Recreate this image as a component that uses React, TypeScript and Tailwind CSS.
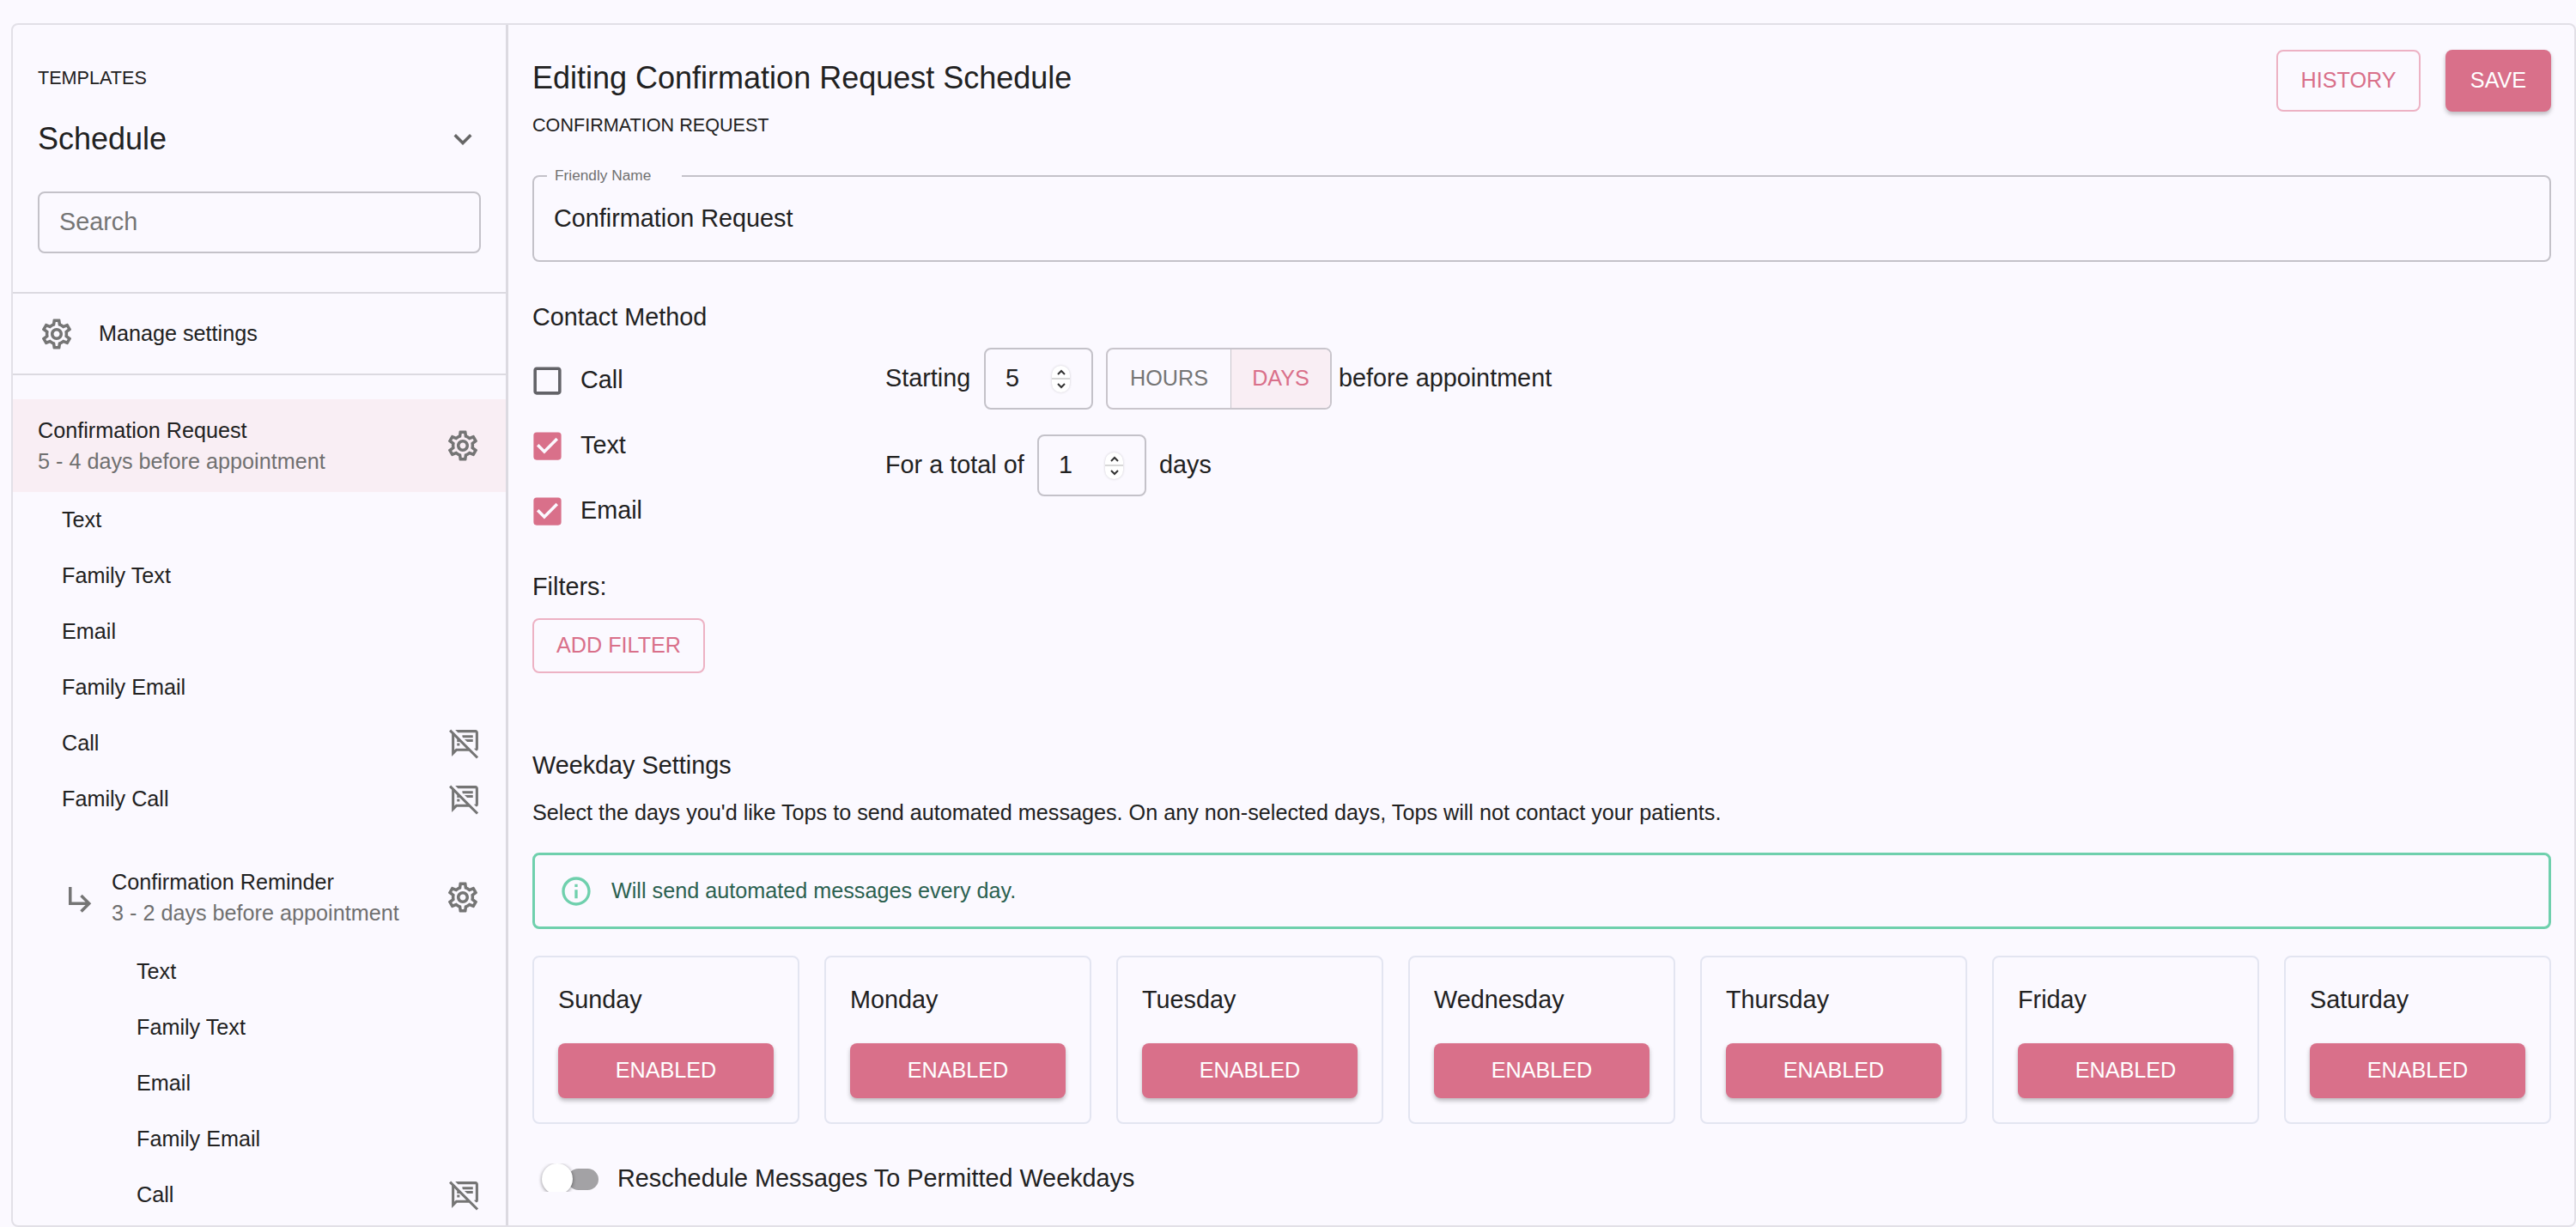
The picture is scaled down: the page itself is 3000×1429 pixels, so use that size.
import React from "react";
import {
  MdCheckBox,
  MdCheckBoxOutlineBlank,
  MdInfoOutline,
  MdKeyboardArrowDown,
  MdOutlineSettings,
  MdOutlineSpeakerNotesOff,
  MdSubdirectoryArrowRight,
} from "react-icons/md";

const days = ["Sunday", "Monday", "Tuesday", "Wednesday", "Thursday", "Friday", "Saturday"];

const MessageRow = ({ label, off, nested }: { label: string; off?: boolean; nested?: boolean }) => (
  <div className={`flex h-[65px] items-center justify-between pr-[29px] ${nested ? "pl-[144px]" : "pl-[57px]"}`}>
    <span className="text-[25.2px] text-[#212121]">{label}</span>
    {off && <MdOutlineSpeakerNotesOff className="text-[37px] text-[#757575]" />}
  </div>
);

const Spinner = () => (
  <div className="flex h-[31px] w-[21px] flex-col items-center rounded-full bg-white shadow-[0_0_3px_rgba(0,0,0,0.18)]">
    <svg viewBox="0 0 12 8" className="mt-[4px] h-2 w-3 fill-none stroke-[#333] stroke-[2]">
      <path d="M2 6l4-4 4 4" />
    </svg>
    <div className="mt-[2px] h-[2px] w-full bg-[#d8d8d8]" />
    <svg viewBox="0 0 12 8" className="mt-[3px] h-2 w-3 fill-none stroke-[#333] stroke-[2]">
      <path d="M2 2l4 4 4-4" />
    </svg>
  </div>
);

const NumberField = ({ value }: { value: string }) => (
  <div className="flex h-[72px] w-[127px] items-center justify-between rounded-lg border-2 border-[#c4c2c9] pl-[23px] pr-[25px] text-[28.8px]">
    <span>{value}</span>
    <Spinner />
  </div>
);

const ContactCheck = ({ label, checked }: { label: string; checked?: boolean }) => (
  <div className="flex h-[76px] items-center text-[28.8px]">
    {checked ? (
      <MdCheckBox className="-mx-[5px] text-[43px] text-[#d9708a]" />
    ) : (
      <MdCheckBoxOutlineBlank className="-mx-[5px] text-[43px] text-[#636368]" />
    )}
    <span className="ml-[22px]">{label}</span>
  </div>
);

export default function App() {
  return (
    <div className="h-[1429px] w-[3000px] overflow-hidden bg-[#fbf9ff] pl-[13px] pt-[27px] font-['Liberation_Sans',Arial,sans-serif] text-[#212121]">
      <div className="flex h-[1402px] overflow-hidden rounded-lg border-2 border-[#e2e0e7]">
        <aside className="w-[577px] shrink-0 border-r-[3px] border-[#dcdae1]">
          <div className="px-[29px] pb-[45px] pt-[48px]">
            <div className="h-7 text-[21.6px] leading-7">TEMPLATES</div>
            <div className="mt-8 flex h-[50px] items-center justify-between">
              <span className="text-[36px]">Schedule</span>
              <MdKeyboardArrowDown className="text-[42px] text-[#666]" />
            </div>
            <div className="mt-9 flex h-[72px] w-[516px] items-center rounded-lg border-2 border-[#c4c2c9] pl-[23px] text-[28.8px] text-[#757575]">
              Search
            </div>
          </div>
          <div className="flex h-[97px] items-center border-y-2 border-[#dcdae1] pl-[30px] text-[25.2px]">
            <MdOutlineSettings className="text-[42px] text-[#757575]" />
            <span className="ml-[28px]">Manage settings</span>
          </div>
          <div className="mt-7 flex h-[108px] items-center justify-between bg-[#f9eef4] pl-[29px] pr-[29px]">
            <div className="leading-[36px]">
              <div className="text-[25.2px]">Confirmation Request</div>
              <div className="text-[25.2px] text-[#707070]">5 - 4 days before appointment</div>
            </div>
            <MdOutlineSettings className="text-[42px] text-[#757575]" />
          </div>
          <MessageRow label="Text" />
          <MessageRow label="Family Text" />
          <MessageRow label="Email" />
          <MessageRow label="Family Email" />
          <MessageRow label="Call" off />
          <MessageRow label="Family Call" off />
          <div className="mt-7 flex h-[108px] items-center justify-between pl-[58px] pr-[29px]">
            <div className="flex items-center">
              <MdSubdirectoryArrowRight className="mt-[3px] text-[42px] text-[#757575]" />
              <div className="ml-[15px] leading-[36px]">
                <div className="text-[25.2px]">Confirmation Reminder</div>
                <div className="text-[25.2px] text-[#707070]">3 - 2 days before appointment</div>
              </div>
            </div>
            <MdOutlineSettings className="text-[42px] text-[#757575]" />
          </div>
          <MessageRow label="Text" nested />
          <MessageRow label="Family Text" nested />
          <MessageRow label="Email" nested />
          <MessageRow label="Family Email" nested />
          <MessageRow label="Call" off nested />
        </aside>

        <main className="min-w-0 flex-1 pl-[28px] pr-[27px]">
          <div className="flex items-start justify-between pt-[29px]">
            <div>
              <h1 className="mt-[8px] h-[50px] text-[36px] leading-[50px]">Editing Confirmation Request Schedule</h1>
              <div className="mt-[16px] h-7 text-[21.6px] leading-7">CONFIRMATION REQUEST</div>
            </div>
            <div className="flex gap-[29px]">
              <button className="h-[72px] w-[168px] rounded-lg border-2 border-[#edb2c4] text-[25.2px] text-[#d9708a]">
                HISTORY
              </button>
              <button className="h-[72px] w-[123px] rounded-lg bg-[#d9708a] text-[25.2px] text-white shadow-[0_3px_5px_rgba(0,0,0,0.25)]">
                SAVE
              </button>
            </div>
          </div>

          <div className="relative mt-[44px] flex h-[101px] items-center rounded-lg border-2 border-[#c4c2c9] pl-[23px] text-[28.8px]">
            <span className="absolute -top-[13px] left-[15px] bg-[#fbf9ff] px-[9px] pr-[36px] text-[17.3px] leading-[22px] text-[#707070]">
              Friendly Name
            </span>
            Confirmation Request
          </div>

          <div className="mt-[46px] h-9 text-[28.8px] leading-9">Contact Method</div>

          <div className="mt-[18px] flex">
            <div className="w-[411px] pl-[1px]">
              <ContactCheck label="Call" />
              <ContactCheck label="Text" checked />
              <ContactCheck label="Email" checked />
            </div>
            <div className="text-[28.8px]">
              <div className="flex h-[72px] items-center">
                <span className="w-[115px]">Starting</span>
                <NumberField value="5" />
                <div className="ml-[15px] flex h-[72px] w-[263px] rounded-lg border-2 border-[#c9c5cc] text-[25.2px]">
                  <span className="flex w-[143px] items-center justify-center text-[#757575]">HOURS</span>
                  <span className="flex flex-1 items-center justify-center rounded-r-md border-l border-[#c9c5cc] bg-[#f9eef4] text-[#d9708a]">
                    DAYS
                  </span>
                </div>
                <span className="ml-2">before appointment</span>
              </div>
              <div className="mt-[29px] flex h-[72px] items-center">
                <span className="w-[177px]">For a total of</span>
                <NumberField value="1" />
                <span className="ml-[15px]">days</span>
              </div>
            </div>
          </div>

          <div className="mt-[32px] h-9 text-[28.8px] leading-9">Filters:</div>
          <button className="mt-[19px] h-[64px] w-[201px] rounded-lg border-2 border-[#edb2c4] text-[25.2px] text-[#d9708a]">
            ADD FILTER
          </button>

          <div className="mt-[89px] h-9 text-[28.8px] leading-9">Weekday Settings</div>
          <p className="mt-[19px] h-9 text-[25.2px] leading-9">
            Select the days you'd like Tops to send automated messages. On any non-selected days, Tops will not contact your patients.
          </p>

          <div className="mt-[29px] flex h-[89px] items-center rounded-lg border-[3px] border-[#6fd0ad] pl-[28px] text-[25.2px] text-[#2b6150]">
            <MdInfoOutline className="text-[40px] text-[#6fd0ad]" />
            <span className="ml-[21px]">Will send automated messages every day.</span>
          </div>

          <div className="mt-[31px] grid grid-cols-7 gap-[29px]">
            {days.map((day) => (
              <div key={day} className="h-[196px] rounded-lg border-2 border-[#e3e5f1] px-[28px]">
                <div className="mt-[31px] h-9 text-[28.8px] leading-9">{day}</div>
                <button className="mt-[33px] h-[64px] w-full rounded-lg bg-[#d9708a] text-[25.2px] text-white shadow-[0_3px_5px_rgba(0,0,0,0.25)]">
                  ENABLED
                </button>
              </div>
            ))}
          </div>

          <div className="mt-[46px] flex h-9 items-center pl-[11px] text-[28.8px]">
            <div className="relative h-[25px] w-[66px]">
              <div className="absolute left-[30px] top-0 h-[25px] w-[36px] rounded-full bg-[#a3a2a5]" />
              <div className="absolute -left-[4px] -top-[6px] h-[33px] w-[44px] overflow-hidden px-[4px]">
                <div className="h-[36px] w-[36px] rounded-full bg-white shadow-[0_1px_4px_rgba(0,0,0,0.45)]" />
              </div>
            </div>
            <span className="ml-[22px]">Reschedule Messages To Permitted Weekdays</span>
          </div>
        </main>
      </div>
    </div>
  );
}
